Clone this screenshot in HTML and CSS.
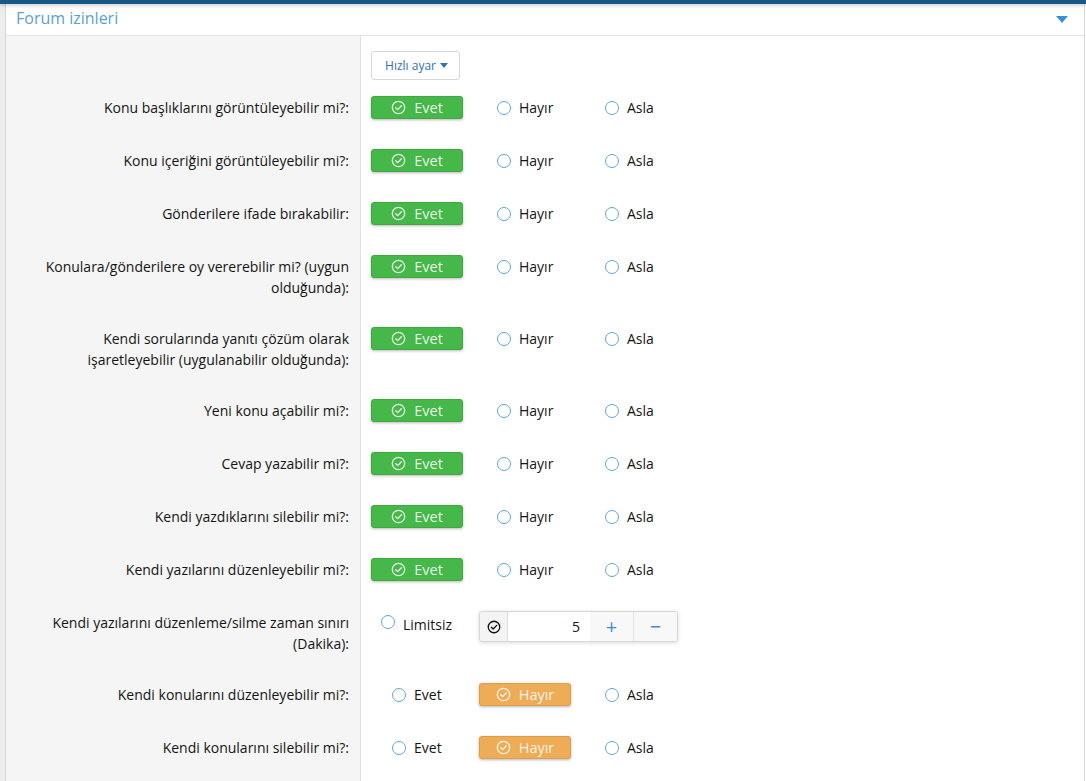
FILE: index.html
```html
<!DOCTYPE html>
<html lang="tr">
<head>
<meta charset="utf-8">
<title>Forum izinleri</title>
<link rel="stylesheet" href="styles.css">
</head>
<body>
<div class="topbar"></div>
<div class="page">
  <div class="gutter"></div>
  <div class="panel">
    <div class="panel-head">
      <h2 class="panel-title">Forum izinleri</h2>
      <svg class="head-caret" width="12" height="7" viewBox="0 0 12 7"><path d="M0 0h12L6 7z" fill="#3d8fd5"/></svg>
    </div>
    <div class="form">
      <div class="row row-quick">
        <div class="row-label"></div>
        <div class="row-ctrl row-ctrl-quick">
          <button class="quick-btn">Hızlı ayar <svg width="8" height="5" viewBox="0 0 8 5"><path d="M0 0h8L4 5z" fill="#2f72ae"/></svg></button>
        </div>
      </div>

      <div class="row">
        <div class="row-label">Konu başlıklarını görüntüleyebilir mi?:</div>
        <div class="row-ctrl">
          <div class="choice"><span class="btn-on green"><svg class="chk" viewBox="0 0 16 16"><circle cx="8" cy="8" r="6.6"/><path d="M5 8.2l2.1 2.1 4-4.2"/></svg>Evet</span></div>
          <div class="choice radio"><span class="dot"></span>Hayır</div>
          <div class="choice radio"><span class="dot"></span>Asla</div>
        </div>
      </div>

      <div class="row">
        <div class="row-label">Konu içeriğini görüntüleyebilir mi?:</div>
        <div class="row-ctrl">
          <div class="choice"><span class="btn-on green"><svg class="chk" viewBox="0 0 16 16"><circle cx="8" cy="8" r="6.6"/><path d="M5 8.2l2.1 2.1 4-4.2"/></svg>Evet</span></div>
          <div class="choice radio"><span class="dot"></span>Hayır</div>
          <div class="choice radio"><span class="dot"></span>Asla</div>
        </div>
      </div>

      <div class="row">
        <div class="row-label">Gönderilere ifade bırakabilir:</div>
        <div class="row-ctrl">
          <div class="choice"><span class="btn-on green"><svg class="chk" viewBox="0 0 16 16"><circle cx="8" cy="8" r="6.6"/><path d="M5 8.2l2.1 2.1 4-4.2"/></svg>Evet</span></div>
          <div class="choice radio"><span class="dot"></span>Hayır</div>
          <div class="choice radio"><span class="dot"></span>Asla</div>
        </div>
      </div>

      <div class="row">
        <div class="row-label">Konulara/gönderilere oy vererebilir mi? (uygun olduğunda):</div>
        <div class="row-ctrl">
          <div class="choice"><span class="btn-on green"><svg class="chk" viewBox="0 0 16 16"><circle cx="8" cy="8" r="6.6"/><path d="M5 8.2l2.1 2.1 4-4.2"/></svg>Evet</span></div>
          <div class="choice radio"><span class="dot"></span>Hayır</div>
          <div class="choice radio"><span class="dot"></span>Asla</div>
        </div>
      </div>

      <div class="row">
        <div class="row-label">Kendi sorularında yanıtı çözüm olarak işaretleyebilir (uygulanabilir olduğunda):</div>
        <div class="row-ctrl">
          <div class="choice"><span class="btn-on green"><svg class="chk" viewBox="0 0 16 16"><circle cx="8" cy="8" r="6.6"/><path d="M5 8.2l2.1 2.1 4-4.2"/></svg>Evet</span></div>
          <div class="choice radio"><span class="dot"></span>Hayır</div>
          <div class="choice radio"><span class="dot"></span>Asla</div>
        </div>
      </div>

      <div class="row">
        <div class="row-label">Yeni konu açabilir mi?:</div>
        <div class="row-ctrl">
          <div class="choice"><span class="btn-on green"><svg class="chk" viewBox="0 0 16 16"><circle cx="8" cy="8" r="6.6"/><path d="M5 8.2l2.1 2.1 4-4.2"/></svg>Evet</span></div>
          <div class="choice radio"><span class="dot"></span>Hayır</div>
          <div class="choice radio"><span class="dot"></span>Asla</div>
        </div>
      </div>

      <div class="row">
        <div class="row-label">Cevap yazabilir mi?:</div>
        <div class="row-ctrl">
          <div class="choice"><span class="btn-on green"><svg class="chk" viewBox="0 0 16 16"><circle cx="8" cy="8" r="6.6"/><path d="M5 8.2l2.1 2.1 4-4.2"/></svg>Evet</span></div>
          <div class="choice radio"><span class="dot"></span>Hayır</div>
          <div class="choice radio"><span class="dot"></span>Asla</div>
        </div>
      </div>

      <div class="row">
        <div class="row-label">Kendi yazdıklarını silebilir mi?:</div>
        <div class="row-ctrl">
          <div class="choice"><span class="btn-on green"><svg class="chk" viewBox="0 0 16 16"><circle cx="8" cy="8" r="6.6"/><path d="M5 8.2l2.1 2.1 4-4.2"/></svg>Evet</span></div>
          <div class="choice radio"><span class="dot"></span>Hayır</div>
          <div class="choice radio"><span class="dot"></span>Asla</div>
        </div>
      </div>

      <div class="row">
        <div class="row-label">Kendi yazılarını düzenleyebilir mi?:</div>
        <div class="row-ctrl">
          <div class="choice"><span class="btn-on green"><svg class="chk" viewBox="0 0 16 16"><circle cx="8" cy="8" r="6.6"/><path d="M5 8.2l2.1 2.1 4-4.2"/></svg>Evet</span></div>
          <div class="choice radio"><span class="dot"></span>Hayır</div>
          <div class="choice radio"><span class="dot"></span>Asla</div>
        </div>
      </div>

      <div class="row">
        <div class="row-label">Kendi yazılarını düzenleme/silme zaman sınırı (Dakika):</div>
        <div class="row-ctrl">
          <div class="choice limit"><span class="dot"></span>Limitsiz</div>
          <div class="spin">
            <span class="spin-check"><svg width="14" height="14" viewBox="0 0 16 16"><circle cx="8" cy="8" r="6.6" fill="none" stroke="#111" stroke-width="1.5"/><path d="M5 8.2l2.1 2.1 4-4.2" fill="none" stroke="#111" stroke-width="1.5" stroke-linecap="round" stroke-linejoin="round"/></svg></span>
            <span class="spin-val">5</span>
            <span class="spin-btn">+</span>
            <span class="spin-btn spin-minus">−</span>
          </div>
        </div>
      </div>

      <div class="row">
        <div class="row-label">Kendi konularını düzenleyebilir mi?:</div>
        <div class="row-ctrl">
          <div class="choice radio first"><span class="dot"></span>Evet</div>
          <div class="choice"><span class="btn-on orange"><svg class="chk" viewBox="0 0 16 16"><circle cx="8" cy="8" r="6.6"/><path d="M5 8.2l2.1 2.1 4-4.2"/></svg>Hayır</span></div>
          <div class="choice radio"><span class="dot"></span>Asla</div>
        </div>
      </div>

      <div class="row">
        <div class="row-label">Kendi konularını silebilir mi?:</div>
        <div class="row-ctrl">
          <div class="choice radio first"><span class="dot"></span>Evet</div>
          <div class="choice"><span class="btn-on orange"><svg class="chk" viewBox="0 0 16 16"><circle cx="8" cy="8" r="6.6"/><path d="M5 8.2l2.1 2.1 4-4.2"/></svg>Hayır</span></div>
          <div class="choice radio"><span class="dot"></span>Asla</div>
        </div>
      </div>
      <div class="row row-tail">
        <div class="row-label"></div>
        <div class="row-ctrl"></div>
      </div>
    </div>
  </div>
</div>
</body>
</html>
```

FILE: styles.css
```css
* { box-sizing: border-box; }
html, body { margin: 0; padding: 0; background: #fff; }
body {
  font-family: "Open Sans", "Noto Sans", sans-serif;
  font-size: 14px;
  color: #141414;
  overflow: hidden;
  height: 781px;
}
.topbar {
  height: 4px;
  background: #185886;
  box-shadow: 0 1px 4px rgba(0,0,0,.25);
  position: relative;
  z-index: 2;
}
.page {
  display: flex;
  height: 777px;
}
.gutter {
  width: 6px;
  flex: none;
  background: #ededed;
  border-right: 1px solid #d6d6d6;
}
.panel {
  width: 1079px;
  flex: none;
  border-right: 1px solid #d9d9d9;
  background: #fff;
}
.panel-head {
  height: 32px;
  border-bottom: 1px solid #e3e3e3;
  display: flex;
  align-items: center;
  justify-content: space-between;
  padding: 0 16px 3px 10px;
}
.panel-title {
  margin: 0;
  font-weight: normal;
  font-size: 16px;
  color: #5c9fd1;
}
.head-caret { margin-top: 2px; }
.form { display: flex; flex-direction: column; }
.row { display: flex; }
.row-label {
  width: 355px;
  flex: none;
  background: #f5f5f5;
  border-right: 1px solid #e1e1e1;
  text-align: right;
  padding: 16px 11px 14px 20px;
  line-height: 21px;
}
.row-ctrl {
  flex: 1;
  display: flex;
  align-items: flex-start;
  padding: 15px 10px;
}
.row-ctrl-quick { padding: 15px 10px 1px; }
.quick-btn {
  font-family: inherit;
  font-size: 12px;
  color: #2f72ae;
  background: #fff;
  border: 1px solid #d8d8d8;
  border-radius: 3px;
  height: 29px;
  width: 89px;
  padding: 0 0 0 2px;
  display: flex;
  align-items: center;
  justify-content: center;
  gap: 4px;
}
.choice {
  width: 108px;
  flex: none;
  height: 23px;
  display: flex;
  align-items: center;
}
.choice.radio { padding-left: 18px; }
.choice.radio.first { padding-left: 21px; }
.dot {
  width: 14px;
  height: 14px;
  border: 1.5px solid #5ea6da;
  border-radius: 50%;
  background: #fff;
  margin-right: 8px;
  flex: none;
}
.btn-on {
  width: 92px;
  height: 23px;
  border-radius: 3px;
  display: flex;
  align-items: center;
  justify-content: center;
  gap: 8px;
  font-size: 14.5px;
  color: rgba(255,255,255,.88);
  box-shadow: 0 1px 3px rgba(0,0,0,.28);
}
.btn-on.green { background: #46b749; border: 1px solid #3ea841; }
.btn-on.orange { background: #eeac57; border: 1px solid #dd9c48; }
.chk {
  width: 15px;
  height: 15px;
  fill: none;
  stroke: rgba(255,255,255,.88);
  stroke-width: 1.4;
  stroke-linecap: round;
  stroke-linejoin: round;
}
.choice.limit {
  padding-left: 10px;
  height: 24px;
  align-items: flex-start;
  line-height: 20px;
  padding-top: 4px;
}
.spin {
  display: flex;
  height: 31px;
  width: 199px;
  border: 1px solid #d6d6d6;
  border-radius: 3px;
  box-shadow: 0 1px 4px rgba(0,0,0,.14);
  background: #fff;
  overflow: hidden;
}
.spin-check {
  width: 28px;
  flex: none;
  background: #f4f4f4;
  border-right: 1px solid #dcdcdc;
  display: flex;
  align-items: center;
  justify-content: center;
}
.spin-val {
  width: 82px;
  flex: none;
  text-align: right;
  padding-right: 10px;
  line-height: 29px;
  font-size: 14px;
}
.spin-btn {
  width: 43px;
  flex: none;
  background: #f8f8f8;
  color: #3b8fd6;
  font-size: 20px;
  display: flex;
  align-items: center;
  justify-content: center;
  line-height: 1;
}
.spin-minus { flex: 1; border-left: 1px solid #e2e2e2; }
.row-tail { flex: 1; min-height: 20px; }
```
